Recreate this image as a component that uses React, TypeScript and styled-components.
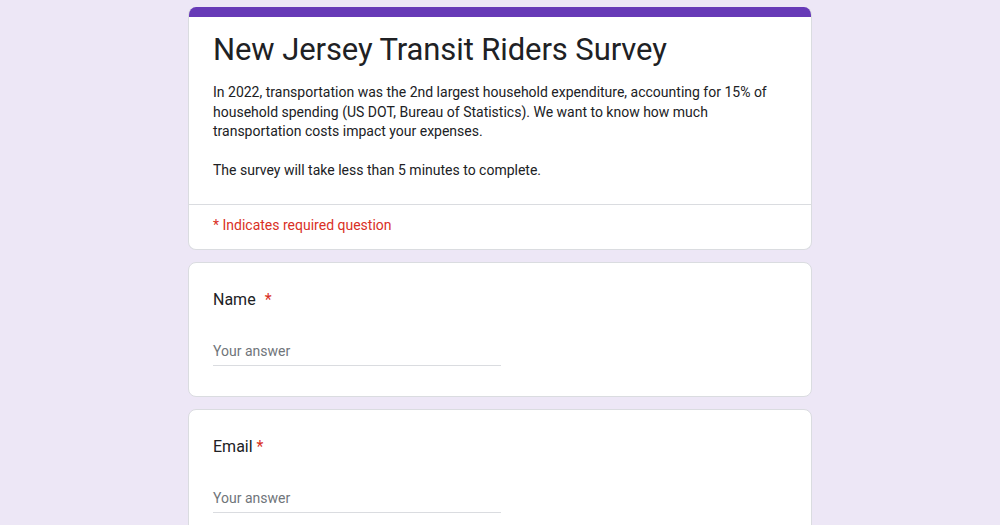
import React from "react";
import styled, { createGlobalStyle } from "styled-components";

const Global = createGlobalStyle`
  html, body { margin: 0; padding: 0; background: #ede7f6; }
  body { font-family: Roboto, "Noto Sans", Arial, sans-serif; color: #202124; }
  * { box-sizing: border-box; }
`;

const Page = styled.div`
  display: flex;
  flex-direction: column;
  align-items: center;
  gap: 12px;
  padding-top: 7px;
`;

const Card = styled.div<{ $header?: boolean }>`
  width: 624px;
  background: #fff;
  border: 1px solid #dadce0;
  border-radius: 8px;
  overflow: hidden;
  ${(p) => (p.$header ? "border-top: none;" : "")}
`;

const TopBar = styled.div`
  height: 10px;
  background: #673ab7;
`;

const HeaderBody = styled.div`
  padding: 12px 24px 23px;
`;

const Title = styled.h1`
  margin: 0;
  font-size: 31px;
  line-height: 42px;
  font-weight: 400;
  color: #202124;
  letter-spacing: -0.1px;
`;

const Description = styled.p`
  margin: 12px 0 0;
  font-size: 14px;
  line-height: 19.5px;
  color: #202124;
  white-space: pre-line;
`;

const Divider = styled.div`
  height: 1px;
  background: #dadce0;
`;

const Required = styled.div`
  padding: 10px 24px 14px;
  font-size: 14px;
  line-height: 20px;
  color: #d93025;
`;

const QuestionBody = styled.div`
  padding: 25px 24px 30px;
  display: flex;
  flex-direction: column;
`;

const Label = styled.div`
  font-size: 16px;
  line-height: 24px;
  color: #202124;
`;

const Star = styled.span<{ $gap: number }>`
  color: #d93025;
  margin-left: ${(p) => p.$gap}px;
`;

const Answer = styled.div`
  margin-top: 29px;
  width: 288px;
  font-size: 14px;
  line-height: 20px;
  color: #70757a;
  padding-bottom: 4px;
  border-bottom: 1px solid #dadce0;
`;

export default function App() {
  return (
    <>
      <Global />
      <Page>
        <Card $header>
          <TopBar />
          <HeaderBody>
            <Title>New Jersey Transit Riders Survey</Title>
            <Description>
              {"In 2022, transportation was the 2nd largest household expenditure, accounting for 15% of\nhousehold spending (US DOT, Bureau of Statistics). We want to know how much\ntransportation costs impact your expenses.\n\nThe survey will take less than 5 minutes to complete."}
            </Description>
          </HeaderBody>
          <Divider />
          <Required>* Indicates required question</Required>
        </Card>
        <Card>
          <QuestionBody>
            <Label>
              Name<Star $gap={9}>*</Star>
            </Label>
            <Answer>Your answer</Answer>
          </QuestionBody>
        </Card>
        <Card>
          <QuestionBody>
            <Label>
              Email<Star $gap={4}>*</Star>
            </Label>
            <Answer>Your answer</Answer>
          </QuestionBody>
        </Card>
      </Page>
    </>
  );
}
